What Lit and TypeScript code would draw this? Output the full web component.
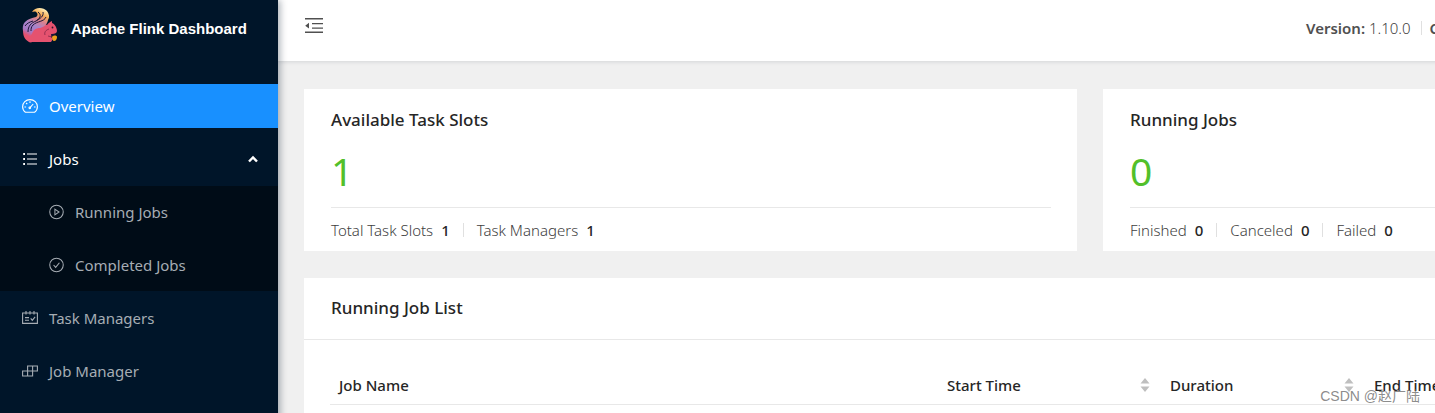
import { LitElement, html, svg, css } from "lit";
import { customElement, property, state } from "lit/decorators.js";

const icons: Record<string, unknown> = {
  dashboard: svg`<path d="M3.4 14.2C1.7 13 .6 11 .6 8.8A7.4 7.2 0 0 1 15.4 8.8C15.4 11 14.3 13 12.6 14.2Z"/><path d="M8 9.6 11.2 6M8 3.2v1.7M2.4 9h1.7M11.9 9h1.7M4.1 5l1.2 1.2"/><circle cx="7.8" cy="9.8" r=".8"/>`,
  list: svg`<path d="M5 3h10M5 8h10M5 13h10"/><path stroke-width="1.8" d="M1.2 3h1.8M1.2 8h1.8M1.2 13h1.8"/>`,
  play: svg`<circle cx="8" cy="8" r="7.2"/><path d="M6.3 5v6l4.4-3Z"/>`,
  check: svg`<circle cx="8" cy="8" r="7.2"/><path d="m4.9 8 2.2 2.6 4-5"/>`,
  schedule: svg`<path d="M.6 3h14.8v10.4H.6ZM4 1v3.6M8 1v3.6M12 1v3.6M3 7.6h4M3 10.2h4M8.7 8.4l1.6 2 2.8-3.6"/>`,
  build: svg`<path d="M.6 8h10v5H.6ZM5.6 3h9.8v5H5.6ZM5.6 8v5M10.6 3v5"/>`,
};

const squirrel = svg`
  <defs>
    <linearGradient id="tail" x1=".75" y1="0" x2=".3" y2="1">
      <stop offset="0" stop-color="#fff0b8"/><stop offset=".2" stop-color="#f5ae58"/>
      <stop offset=".4" stop-color="#d9808f"/><stop offset=".62" stop-color="#a784cc"/>
      <stop offset=".85" stop-color="#a578c4"/><stop offset="1" stop-color="#e5526f"/>
    </linearGradient>
  </defs>
  <path fill="#e5526f" d="M7 35C2 32 0 27 2 22c3-5 10-6 16-6 3 0 5 1 7 2 1-2 3-3 5-4v2c3 1 5 5 5 8 0 2-2 3-5 3l-1 3 2 2-2 3H11c-1 0-3 1-4 0Z"/>
  <path fill="url(#tail)" d="M10 5C13 0 21 0 25 4c2 3 3 6 1 9-1 5-4 7-8 8-4 0-7 2-8 6l-3 3-4-1C0 24 0 18 3 15c3-3 7-4 11-5 2-1 2-4 0-5-1-1-3 0-4 0Z"/>
  <path fill="none" stroke="#1d1738" stroke-width="1" d="M16 5c4 3 2 7-2 9-5 2-8 5-8 11M24 10c-2 5-9 4-13 8-2 2-2 4-2 6M21 5c1 4-3 7-6 8M3 19c2-3 5-4 8-5"/>
  <path fill="none" stroke="#8e2b4d" stroke-width=".9" d="M27 22c-3 1-5 3-4 6M26 29l4 1"/>
  <circle cx="30.5" cy="20.5" r=".9" fill="#30152c"/>
  <path fill="#1d1738" d="M29 27h5l-4 3Z"/>
  <path fill="#eda11e" d="M30 30c1-2 5-2 5 0 0 2-1 4-3 4-1 0-2-2-2-4Z"/>`;

@customElement("side-menu")
class SideMenu extends LitElement {
  @state() private jobsOpen = true;

  static styles = css`
    :host {
      display: block;
      flex: none;
      width: 278px;
      background: #001529;
      color: #a6adb4;
      box-shadow: 2px 0 7px rgba(0, 21, 41, 0.35);
      z-index: 2;
    }
    .logo {
      display: flex;
      align-items: center;
      gap: 13px;
      height: 56px;
      margin-bottom: 28px;
      padding-left: 22px;
      color: #fff;
      text-decoration: none;
      font: bold 15px "Liberation Sans", Arial, sans-serif;
    }
    .mark { align-self: flex-start; width: 36px; height: 36px; margin-top: 7px; }
    nav { display: flex; flex-direction: column; gap: 9px; }
    .item {
      box-sizing: border-box;
      display: flex;
      align-items: center;
      gap: 11px;
      width: 100%;
      height: 44px;
      padding: 0 20px 0 22px;
      border: 0;
      background: none;
      color: inherit;
      font: inherit;
      text-decoration: none;
      cursor: pointer;
    }
    .item:hover, .open, .active { color: #fff; }
    .active { background: #1890ff; }
    .icon { width: 16px; height: 16px; flex: none; fill: none; stroke: currentColor; stroke-width: 1.1; }
    .caret { width: 10px; height: 10px; margin-left: auto; fill: none; stroke: currentColor; stroke-width: 2.4; }
    .closed { transform: rotate(180deg); }
    .sub {
      display: flex;
      flex-direction: column;
      gap: 9px;
      margin: -4px 0;
      padding: 4px 0;
      background: #000c17;
    }
    .sub .item { padding-left: 49px; }
    .sub .icon { width: 15px; }
  `;

  private link(icon: string, label: string, extra = "") {
    return html`<a class="item ${extra}" href="#">
      <svg class="icon" viewBox="0 0 16 16" aria-hidden="true">${icons[icon]}</svg><span>${label}</span>
    </a>`;
  }

  render() {
    return html`
      <a class="logo" href="#">
        <svg class="mark" viewBox="0 0 36 36" aria-hidden="true">${squirrel}</svg>
        <span>Apache Flink Dashboard</span>
      </a>
      <nav>
        ${this.link("dashboard", "Overview", "active")}
        <button class="item open" aria-expanded=${this.jobsOpen} @click=${() => (this.jobsOpen = !this.jobsOpen)}>
          <svg class="icon" viewBox="0 0 16 16" aria-hidden="true">${icons.list}</svg><span>Jobs</span>
          <svg class="caret ${this.jobsOpen ? "" : "closed"}" viewBox="0 0 10 10" aria-hidden="true"><path d="m1 7.5 4-4 4 4"/></svg>
        </button>
        ${this.jobsOpen
          ? html`<div class="sub">${this.link("play", "Running Jobs")}${this.link("check", "Completed Jobs")}</div>`
          : ""}
        ${this.link("schedule", "Task Managers")}
        ${this.link("build", "Job Manager")}
      </nav>
    `;
  }
}

@customElement("stat-card")
class StatCard extends LitElement {
  @property() heading = "";
  @property({ type: Number }) value = 0;
  @property({ attribute: false }) details: [string, number][] = [];

  static styles = css`
    :host { display: block; padding: 18px 26px 9px 27px; background: #fff; }
    h2 { margin: 0; font-size: 17px; line-height: 26px; font-weight: 500; color: #262626; }
    .value {
      padding: 13px 0 11px;
      border-bottom: 1px solid #e8e8e8;
      font-size: 39px;
      line-height: 50px;
      font-weight: 400;
      color: #52c02a;
    }
    .details { display: flex; margin-top: 10px; line-height: 24px; font-weight: 300; color: #404040; }
    .detail { display: flex; align-items: center; }
    .detail + .detail::before { content: ""; width: 1px; height: 14px; margin: 0 13px; background: #e0e0e0; }
    strong { margin-left: 8px; font-weight: 500; color: #262626; }
  `;

  render() {
    return html`
      <h2>${this.heading}</h2>
      <div class="value">${this.value}</div>
      <div class="details">
        ${this.details.map(([name, n]) => html`<span class="detail">${name}<strong>${n}</strong></span>`)}
      </div>
    `;
  }
}

@customElement("job-list")
class JobList extends LitElement {
  static styles = css`
    :host { display: block; background: #fff; }
    h2 {
      margin: 0;
      padding: 17px 27px 18px;
      border-bottom: 1px solid #e8e8e8;
      font-size: 17px;
      line-height: 26px;
      font-weight: 500;
      color: #262626;
    }
    .body { padding: 26px; }
    table { width: 100%; border-collapse: collapse; table-layout: fixed; }
    .name { width: 40%; }
    .start { width: 223px; }
    .duration { width: 204px; }
    th {
      box-sizing: border-box;
      padding: 7px 11px 7px 9px;
      border-bottom: 1px solid #e8e8e8;
      text-align: left;
      font-weight: 500;
      line-height: 24px;
      color: #262626;
    }
    .cell { display: flex; align-items: center; justify-content: space-between; }
    .sort { display: flex; padding: 0; border: 0; background: none; cursor: pointer; }
    .sort svg { width: 10px; height: 14px; fill: #bfbfbf; }
  `;

  private column(label: string, cls: string, sortable = true) {
    return html`<th class=${cls} scope="col">
      <div class="cell">
        <span>${label}</span>
        ${sortable
          ? html`<button class="sort" aria-label="Sort by ${label}">
              <svg viewBox="0 0 10 14" aria-hidden="true"><path d="M5 0 9.5 5.5H.5ZM5 14 9.5 8.5H.5Z"/></svg>
            </button>`
          : ""}
      </div>
    </th>`;
  }

  render() {
    return html`
      <h2>Running Job List</h2>
      <div class="body">
        <table>
          <thead>
            <tr>
              ${this.column("Job Name", "name", false)}
              ${this.column("Start Time", "start")}
              ${this.column("Duration", "duration")}
              ${this.column("End Time", "end")}
            </tr>
          </thead>
        </table>
      </div>
    `;
  }
}

@customElement("app-root")
class AppRoot extends LitElement {
  static styles = css`
    :host {
      display: block;
      position: relative;
      height: 100vh;
      overflow: hidden;
      font: 15px/24px "Noto Sans", "Open Sans", sans-serif;
      color: #404040;
    }
    .shell { display: flex; min-width: 1902px; min-height: 100%; background: #f0f0f0; }
    .page { flex: 1; min-width: 0; }
    header {
      display: flex;
      align-items: center;
      justify-content: space-between;
      height: 61px;
      padding: 0 26px;
      background: #fff;
      box-shadow: 0 1px 4px rgba(0, 21, 41, 0.12);
    }
    .fold { display: flex; margin-bottom: 9px; padding: 0; border: 0; background: none; cursor: pointer; }
    .fold svg { width: 20px; height: 18px; fill: #505050; }
    .meta { display: flex; align-items: center; min-width: 570px; margin-top: -5px; font-weight: 300; }
    .meta b { font-weight: 600; color: #505050; }
    .rule { width: 1px; height: 14px; margin: 0 8px 0 10px; background: #e0e0e0; }
    main { display: grid; grid-template-columns: 1fr 1fr; gap: 27px 26px; padding: 28px 26px; }
    job-list { grid-column: 1 / -1; }
    .watermark {
      position: absolute;
      right: 15px;
      bottom: 5px;
      font: 14px/24px "Liberation Sans", "Noto Sans CJK SC", sans-serif;
      color: rgba(110, 110, 110, 0.8);
    }
  `;

  render() {
    return html`
      <div class="shell">
        <side-menu></side-menu>
        <div class="page">
          <header>
            <button class="fold" aria-label="Collapse menu">
              <svg viewBox="0 0 20 18" aria-hidden="true">
                <path d="M1 1h18v1.5H1ZM8 6h11v1.2H8ZM8 10.5h11v1.2H8ZM1 14.5h18V16H1ZM1.2 8.7 5 5.8v5.8Z"/>
              </svg>
            </button>
            <div class="meta">
              <span><b>Version:</b> 1.10.0</span><i class="rule"></i><b>Commit:</b>
            </div>
          </header>
          <main>
            <stat-card heading="Available Task Slots" .value=${1}
              .details=${[["Total Task Slots", 1], ["Task Managers", 1]]}></stat-card>
            <stat-card heading="Running Jobs" .value=${0}
              .details=${[["Finished", 0], ["Canceled", 0], ["Failed", 0]]}></stat-card>
            <job-list></job-list>
          </main>
        </div>
      </div>
      <div class="watermark">CSDN @赵广陆</div>
    `;
  }
}
